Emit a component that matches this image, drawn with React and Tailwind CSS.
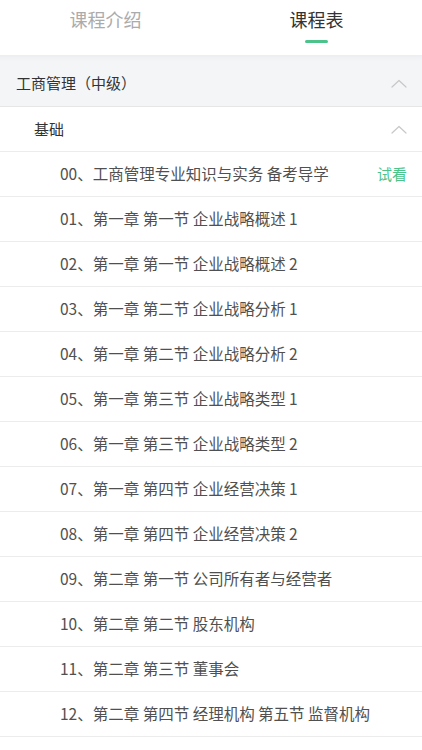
import React, { useState } from 'react';

const lessons = [
  '00、工商管理专业知识与实务 备考导学',
  '01、第一章 第一节 企业战略概述 1',
  '02、第一章 第一节 企业战略概述 2',
  '03、第一章 第二节 企业战略分析 1',
  '04、第一章 第二节 企业战略分析 2',
  '05、第一章 第三节 企业战略类型 1',
  '06、第一章 第三节 企业战略类型 2',
  '07、第一章 第四节 企业经营决策 1',
  '08、第一章 第四节 企业经营决策 2',
  '09、第二章 第一节 公司所有者与经营者',
  '10、第二章 第二节 股东机构',
  '11、第二章 第三节 董事会',
  '12、第二章 第四节 经理机构 第五节 监督机构',
];

function ChevronUp() {
  return (
    <svg width="16" height="9" viewBox="0 0 16 9" fill="none" className="shrink-0">
      <path d="M1 8 L8 1.5 L15 8" stroke="#c8c8c8" strokeWidth="1.2" strokeLinecap="round" strokeLinejoin="round" />
    </svg>
  );
}

export default function App() {
  const [tab, setTab] = useState(1);

  return (
    <div
      className="w-[422px] h-[750px] overflow-hidden bg-white"
      style={{ fontFamily: '"Noto Sans CJK SC", "Noto Sans", sans-serif' }}
    >
      {/* Tabs */}
      <div className="flex h-[55px] bg-white">
        {['课程介绍', '课程表'].map((t, i) => (
          <button
            key={t}
            onClick={() => setTab(i)}
            className="flex-1 flex flex-col items-center pt-[5px]"
          >
            <span className={`text-[18px] leading-[28px] ${tab === i ? 'text-[#333333]' : 'text-[#ababab]'}`}>{t}</span>
            <span className={`mt-[7px] h-[3px] w-[23px] rounded-full ${tab === i ? 'bg-[#4cc38a]' : 'bg-transparent'}`} />
          </button>
        ))}
      </div>

      <div className="h-[6px] bg-gradient-to-b from-[#eceef1] to-[#f4f5f7]" />

      {/* Section */}
      <div className="flex items-center justify-between h-[46px] px-4 pr-[15px] bg-[#f4f5f7] border-b border-[#e6e6e6]">
        <span className="text-[15px] text-[#333333]">工商管理（中级）</span>
        <ChevronUp />
      </div>

      {/* Chapter */}
      <div className="flex items-center justify-between h-[45px] pl-[34px] pr-[15px] border-b border-[#ececec]">
        <span className="text-[15px] text-[#333333]">基础</span>
        <ChevronUp />
      </div>

      {/* Lessons */}
      {lessons.map((l, i) => (
        <div
          key={l}
          className="flex items-center justify-between h-[45px] pl-[60px] pr-[15px] border-b border-[#ececec]"
        >
          <span className="text-[15.5px] text-[#505050] whitespace-nowrap">{l}</span>
          {i === 0 && <span className="text-[15px] text-[#4cc38a]">试看</span>}
        </div>
      ))}
    </div>
  );
}
